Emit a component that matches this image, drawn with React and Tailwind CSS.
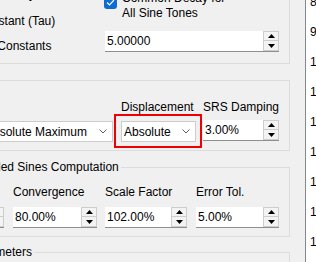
import React from 'react';

const Spin = ({ value, className = '' }) => (
    <div className={`flex h-[21px] border-b border-[#8f8f8f] ${className}`}>
        <div className="min-w-0 flex-1 overflow-hidden whitespace-nowrap bg-white pl-[2px] leading-[20px]">{value}</div>
        <div className="flex w-[16px] shrink-0 flex-col">
            <div className="flex h-[10px] items-center justify-center border border-[#cdcdcd] bg-[#f3f3f3]">
                <svg width="7" height="4" viewBox="0 0 7 4">
                    <polygon points="3.5,0 7,4 0,4" fill="#000" />
                </svg>
            </div>
            <div className="flex flex-1 items-center justify-center border border-t-0 border-[#cdcdcd] bg-[#f3f3f3]">
                <svg width="7" height="4" viewBox="0 0 7 4">
                    <polygon points="0,0 7,0 3.5,4" fill="#000" />
                </svg>
            </div>
        </div>
    </div>
);

const Combo = ({ text, className = '' }) => (
    <div className={`flex h-[21px] items-center border border-[#cccccc] bg-white pl-[2px] ${className}`}>
        <span className="flex-1 overflow-hidden whitespace-nowrap">{text}</span>
        <svg width="8" height="5" viewBox="0 0 8 5" className="mr-[5px] shrink-0">
            <polyline points="0.5,0.5 4,4 7.5,0.5" fill="none" stroke="#606060" />
        </svg>
    </div>
);

const Label = ({ children }) => <div className="h-[15px] whitespace-nowrap leading-[15px]">{children}</div>;

export default function App() {
    const rows = ['8', '9', '10', '11', '12', '13', '14', '15', '16', '17'];

    return (
        <div className="flex h-[262px] w-[316px] overflow-hidden bg-[#f0f0f0] font-['Liberation_Sans',Arial,sans-serif] text-[12px] text-black">
            <div className="w-[305px] shrink-0">
                <div className="ml-[-60px] w-[350px]">
                    {/* decay group */}
                    <div className="mt-[-20px] flex h-[84px] border border-[#dcdcdc]">
                        <div className="w-[163px] shrink-0 pl-[8px] pt-[5.5px] leading-[15px] whitespace-nowrap">
                            <div>Common Decay</div>
                            <div className="ml-[-2px] mt-[12px]">Time Constant (Tau)</div>
                            <div className="ml-[-11px] mt-[10px]">Number of Constants</div>
                        </div>
                        <div className="pt-[9.5px]">
                            <div className="flex items-start">
                                <div className="mt-[5.5px] flex h-[13px] w-[13px] items-center justify-center rounded-[3px] bg-[#0f6cd0]">
                                    <svg width="9" height="7" viewBox="0 0 9 7">
                                        <polyline points="1,3.5 3.5,6 8,1" fill="none" stroke="#fff" strokeWidth="1.2" />
                                    </svg>
                                </div>
                                <div className="ml-[5px] whitespace-nowrap leading-[15px]">
                                    <div>Common Decay for</div>
                                    <div>All Sine Tones</div>
                                </div>
                            </div>
                            <Spin value="5.00000" className="ml-[1px] mt-[10.5px] w-[174px]" />
                        </div>
                    </div>

                    {/* SRS group */}
                    <div className="mt-[16px] flex h-[71px] border border-[#dcdcdc] pt-[19px]">
                        <div className="ml-[41px] w-[131px] shrink-0">
                            <Label />
                            <Combo text="Absolute Maximum" className="mt-[6px] w-full" />
                        </div>
                        <div className="ml-[8px] w-[75px] shrink-0">
                            <Label>Displacement</Label>
                            <div className="relative mt-[6px]">
                                <Combo text="Absolute" className="w-full" />
                                <div className="absolute -bottom-[6px] -left-[7px] -right-[6px] -top-[7px] border-2 border-[#f00000]" />
                            </div>
                        </div>
                        <div className="ml-[7px] w-[76px] shrink-0">
                            <Label>SRS Damping</Label>
                            <Spin value="3.00%" className="mt-[5px] w-full" />
                        </div>
                    </div>

                    {/* sines computation */}
                    <fieldset className="mt-[8px] border border-[#dcdcdc] pb-[8px]">
                        <legend className="ml-[27px] px-[2px] leading-[16px]">Detailed Sines Computation</legend>
                        <div className="flex pt-[10px]">
                            <div className="w-[63px] shrink-0">
                                <Label>Iterations</Label>
                                <Spin value="20" className="mt-[7px] w-full" />
                            </div>
                            <div className="ml-[9px] w-[84px] shrink-0">
                                <Label>Convergence</Label>
                                <Spin value="80.00%" className="mt-[7px] w-full" />
                            </div>
                            <div className="ml-[8px] w-[82px] shrink-0">
                                <Label>Scale Factor</Label>
                                <Spin value="102.00%" className="mt-[7px] w-full" />
                            </div>
                            <div className="ml-[9px] w-[83px] shrink-0">
                                <Label>Error Tol.</Label>
                                <Spin value="5.00%" className="mt-[7px] w-full" />
                            </div>
                        </div>
                    </fieldset>

                    {/* parameters */}
                    <fieldset className="mt-[7px] h-[60px] border border-[#dcdcdc]">
                        <legend className="ml-[27px] px-[2px] leading-[16px]">Parameters</legend>
                    </fieldset>
                </div>
            </div>

            <div className="flex-1 border-l border-[#828790] bg-white pl-[4px]">
                <div className="mt-[-13px] leading-[30px]">
                    {rows.map((n) => (
                        <div key={n} className="whitespace-nowrap">{n}</div>
                    ))}
                </div>
            </div>
        </div>
    );
}
